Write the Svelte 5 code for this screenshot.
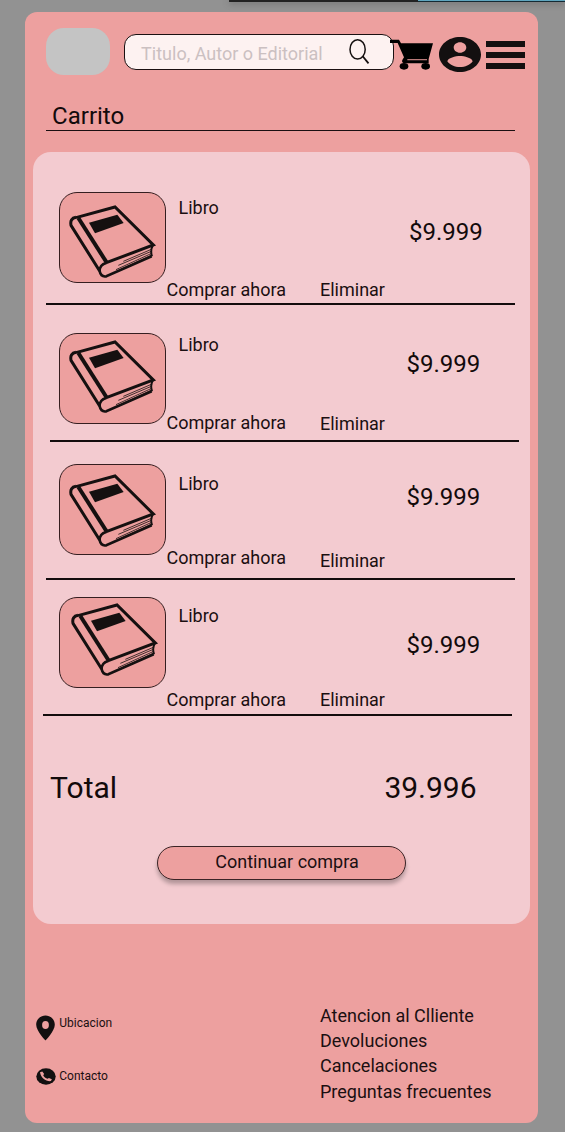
<script>
  const items = [
    { title: 'Libro', price: '$9.999', place: 'first' },
    { title: 'Libro', price: '$9.999', place: 'second' },
    { title: 'Libro', price: '$9.999', place: 'third' },
    { title: 'Libro', price: '$9.999', place: 'fourth' }
  ];
  const links = ['Atencion al Clliente', 'Devoluciones', 'Cancelaciones', 'Preguntas frecuentes'];
</script>

<div class="page">
  <div class="strip"><span class="dark"></span><span class="blue"></span></div>
  <main class="screen">
    <header>
      <div class="logo"></div>
      <div class="search">
        <span>Titulo, Autor o Editorial</span>
        <svg width="22" height="28" viewBox="0 0 22 28" fill="none" stroke="#151010">
          <ellipse cx="9.6" cy="12.4" rx="7.6" ry="9.7" stroke-width="1.5" />
          <path d="M14.7 19.2L20.5 26.4" stroke-width="1.8" />
        </svg>
      </div>
      <svg class="cart" width="44" height="32" viewBox="0 0 132 96">
        <path d="M0 5H27L33 16H129L116 63V76H42Q34 73 37 66L42 58L23 15H0Z" />
        <path d="M52 65H111" stroke="#c98584" stroke-width="3.5" />
        <ellipse cx="42" cy="85" rx="13" ry="10" /><ellipse cx="107" cy="85" rx="13" ry="10" />
      </svg>
      <svg class="user" width="42" height="35" viewBox="2 2 20 20" preserveAspectRatio="none">
        <path fill="#131010" d="M12 2C6.48 2 2 6.48 2 12s4.48 10 10 10 10-4.48 10-10S17.52 2 12 2zm0 3c1.66 0 3 1.34 3 3s-1.34 3-3 3-3-1.34-3-3 1.34-3 3-3zm0 14.2c-2.5 0-4.71-1.28-6-3.22.03-1.99 4-3.08 6-3.08 1.99 0 5.97 1.09 6 3.08-1.29 1.94-3.5 3.22-6 3.22z" />
      </svg>
      <div class="menu"><i></i><i></i><i></i></div>
    </header>

    <h1>Carrito</h1>

    <section class="panel">
      {#each items as item}
        <article class={item.place}>
          <div class="thumb">
            <svg width="90" height="75" viewBox="0 0 270 225" fill="none" stroke="#151010">
              <path stroke-width="9" d="M21 38L138 6L253 120L112 173" />
              <path stroke-width="9" d="M21 37Q2 40 6 61L92 198" />
              <path stroke-width="12" d="M28 39L114 174" />
              <path stroke-width="8" d="M113 173Q90 180 92 199Q96 217 112 214L248 154" />
              <path stroke-width="6" d="M252 120Q243 136 249 154" />
              <path stroke-width="2.4" d="M247 133L163 169M247 139L148 181M248 145L141 194M248 150L152 195" />
              <path fill="#151010" stroke="none" d="M60 53L145 29L164 54L78 85Z" />
            </svg>
          </div>
          <div class="info">
            <span class="title">{item.title}</span>
            <span class="buy">Comprar ahora</span>
          </div>
          <span class="remove">Eliminar</span>
          <span class="price">{item.price}</span>
          <div class="rule"></div>
        </article>
      {/each}
      <div class="total"><span>Total</span><span>39.996</span></div>
      <button>Continuar compra</button>
    </section>

    <footer>
      <div class="contact">
        <div class="location">
          <svg width="19" height="26" viewBox="0 0 19 26"><path fill="#131010" fill-rule="evenodd" d="M9.5 0.5C4.3.5.2 4.6.2 9.8c0 6.3 9.3 15.7 9.3 15.7s9.3-9.4 9.3-15.7C18.8 4.6 14.7.5 9.5.5zm0 5.6a3.4 4 0 1 1 0 8 3.4 4 0 0 1 0-8z" /></svg>
          <span>Ubicacion</span>
        </div>
        <div class="phone">
          <svg width="20" height="17" viewBox="0 0 20 17">
            <ellipse cx="10" cy="8.5" rx="9.7" ry="8.2" fill="#131010" />
            <path d="M4 4.2L6.3 3.4l1.9 2.7-1 1.1c.9 1.9 2.3 3 4.5 3.6l1.2-.9 3 1.3-1 1.9c-5.3.4-9.9-3.1-10.9-8.9z" fill="#eda09f" />
          </svg>
          <span>Contacto</span>
        </div>
      </div>
      <nav>{#each links as link}<span>{link}</span>{/each}</nav>
    </footer>
  </main>
</div>

<style>
  :global(body) { background: #929292; }
  .page { height: 1132px; overflow: hidden; font-family: Roboto, sans-serif; font-size: 18px; line-height: 20px; color: #1b0f11; }
  .strip { display: flex; height: 2px; margin-left: 229px; box-shadow: 0 1px 6px #555; }
  .dark { width: 189px; background: #222; }
  .blue { flex: 1; box-sizing: border-box; background: #5fa6bf; border-bottom: 1px solid #152a33; }
  .screen { box-sizing: border-box; width: 513.5px; height: 1111px; margin: 10.4px 0 0 24.6px; border-radius: 12px; background: #eda09f; }
  header { display: flex; box-sizing: border-box; height: 79px; padding: 15.6px 0 0 21.5px; }
  .logo { width: 64px; height: 47px; border-radius: 18px; background: #c4c4c4; }
  .search { display: flex; box-sizing: border-box; width: 270px; height: 36px; margin: 6px 0 0 14px; border: 1.4px solid #1b1011; border-radius: 12px; background: #fdf2f1; }
  .search span { width: 207px; padding: 9px 0 0 16px; color: #cbc0c1; white-space: nowrap; }
  .search svg { margin-top: 2px; }
  .cart { margin: 10px 0 0 -4px; }
  .user { margin: 9px 0 0 5px; }
  .menu { display: flex; flex-direction: column; gap: 5px; margin: 13px 0 0 5px; }
  .menu i { width: 39px; height: 6px; background: #131010; }
  h1 { box-sizing: border-box; width: 469px; height: 28px; margin: 11.6px 0 0 21.5px; padding-left: 6px; border-bottom: 1.5px solid #1b0f11; font-size: 24px; font-weight: 400; line-height: 26px; color: #120a0b; }
  .panel { width: 497px; height: 772px; margin: 21px 0 0 8.5px; border-radius: 18px; background: #f3cbd0; overflow: hidden; }
  article { display: grid; grid-template-columns: 107px 153.5px var(--price-x) auto; grid-template-rows: calc(var(--h) - 2px) 2px; box-sizing: border-box; height: var(--h); padding-left: 26.4px; align-items: start; }
  .first { --h: 153px; --thumb: 40px; --title: 46px; --buy: 128px; --remove: 128px; --price: 66px; --price-x: 89px; --rule: 13px; --book: 12px; --book-x: 9px; }
  .second { --h: 137px; --thumb: 28px; --title: 30px; --buy: 108px; --remove: 109px; --price: 45px; --price-x: 86.5px; --rule: 17px; --book: 6px; --book-x: 9px; }
  .third { --h: 138px; --thumb: 22.5px; --title: 32px; --buy: 106px; --remove: 109px; --price: 41px; --price-x: 86.5px; --rule: 13px; --book: 8.5px; --book-x: 9px; }
  .fourth { --h: 136px; --thumb: 17px; --title: 26px; --buy: 110px; --remove: 110px; --price: 51px; --price-x: 86.5px; --rule: 9.5px; --book: 5.3px; --book-x: 11px; }
  .thumb { box-sizing: border-box; width: 107px; height: 91px; margin-top: var(--thumb); padding: var(--book) 0 0 var(--book-x); border: 1.3px solid #351e20; border-radius: 18px; background: #eda09f; }
  .thumb svg { display: block; }
  .info { display: flex; flex-direction: column; height: calc(var(--buy) + 20px); justify-content: space-between; white-space: nowrap; }
  .title { padding: var(--title) 0 0 12px; }
  .remove { padding-top: var(--remove); }
  .price { padding-top: var(--price); font-size: 24px; line-height: 28px; color: #120a0b; }
  .rule { grid-column: 1 / -1; width: 469px; height: 2.3px; margin-left: calc(var(--rule) - 26.4px); background: #130c0d; }
  .total { display: flex; justify-content: space-between; padding: 54.5px 53.5px 0 17px; font-size: 30px; line-height: 35px; color: #120a0b; }
  button { display: block; box-sizing: border-box; width: 249px; height: 34px; margin: 41px 0 0 124.4px; padding: 0 0 2px 10px; border: 1.5px solid #3b2426; border-radius: 17px; background: #eda09f; box-shadow: 0 4px 4px #00000045; font: 18px/20px Roboto, sans-serif; color: #1b0f11; }
  footer { display: flex; padding: 79px 0 0 12px; }
  .contact { width: 283.4px; font-size: 12px; line-height: 14px; }
  .contact > div { display: flex; gap: 3.7px; }
  .contact svg { margin-left: -0.5px; margin-right: 0.5px; }
  .location { padding-top: 12.5px; }
  .phone { padding-top: 27px; }
  .contact .phone { gap: 2.7px; }
  .contact span { padding-top: 1px; }
  nav { display: flex; flex-direction: column; line-height: 25.2px; }
</style>
